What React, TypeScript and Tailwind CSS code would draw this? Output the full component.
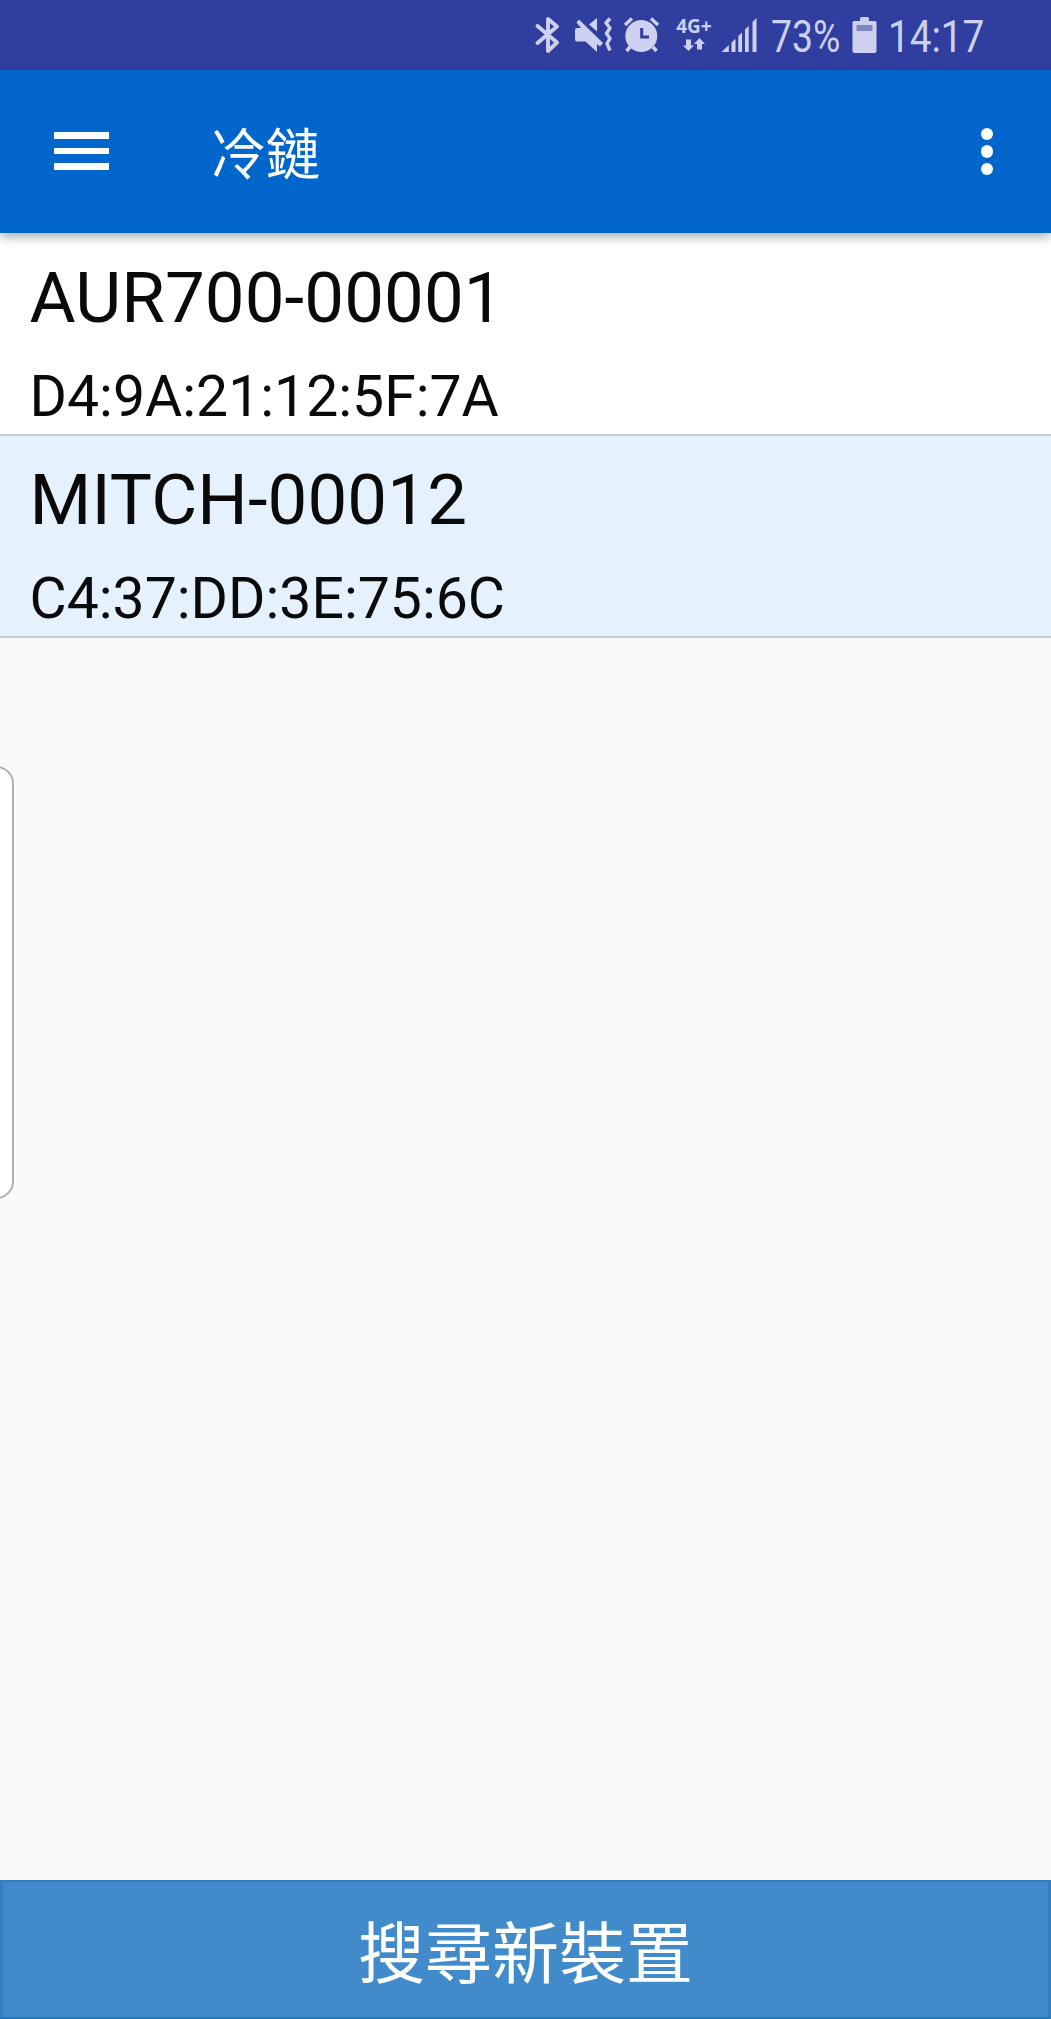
const devices = [
  { name: 'AUR700-00001', mac: 'D4:9A:21:12:5F:7A', selected: false },
  { name: 'MITCH-00012', mac: 'C4:37:DD:3E:75:6C', selected: true },
];

function BluetoothIcon() {
  return (
    <svg className="ml-[534px] w-[28px] h-[40px] shrink-0" viewBox="0 0 28 40" fill="none" stroke="currentColor" strokeWidth="3.9" strokeLinejoin="round">
      <path d="M3.5 12 L23 28.5 L14 37 V5 L23 12.5 L3.5 29" strokeLinecap="round" />
    </svg>
  );
}

function MuteVibrateIcon() {
  return (
    <svg className="ml-[12px] w-[40px] h-[40px] shrink-0" viewBox="0 0 40 40" fill="currentColor">
      <path d="M1 16 Q1 14 3 14 H7 L2.5 8.6 L5 5.5 L29 29 L26 32.5 L23 30 V38 L11.5 27.5 H3 Q1 27.5 1 25.5 Z" />
      <path d="M23 4 V17.5 L15 10.5 Z" />
      <path d="M36 4.5 L32 9 L36 14 L32.5 19.5 L36 24.5 L33 29.5 L36 36.5" fill="none" stroke="currentColor" strokeWidth="3.4" strokeLinejoin="round" />
    </svg>
  );
}

function AlarmIcon() {
  return (
    <svg className="ml-[9px] w-[38px] h-[40px] shrink-0" viewBox="0 0 38 40" fill="none" stroke="currentColor">
      <circle cx="18.3" cy="22" r="16" fill="currentColor" stroke="none" />
      <path d="M2 11 L9 4.5 M28 4.5 L35 11" strokeWidth="3.5" />
      <path d="M7 33 L3.5 37 M30 33 L33.5 37" strokeWidth="3.5" />
      <path d="M18.7 14 V23 H26" stroke="#303f9f" strokeWidth="3" />
    </svg>
  );
}

function NetworkIcon() {
  return (
    <div className="ml-[14px] w-[38px] h-[40px] shrink-0 flex flex-col items-center">
      <span className="h-[21px] mt-[2px] text-[19px] leading-[21px] font-bold font-['Open_Sans',sans-serif] whitespace-nowrap">4G+</span>
      <svg className="mt-[1px] w-[22px] h-[14px]" viewBox="0 0 22 14" fill="currentColor">
        <path d="M3 1.5 H8 V7.5 H11 L5.5 13 L0 7.5 H3 Z M14 11.5 H19 V6 H22 L16.5 0 L11 6 H14 Z" />
      </svg>
    </div>
  );
}

function SignalIcon() {
  return (
    <svg className="ml-[8px] w-[38px] h-[40px] shrink-0" viewBox="0 0 38 40" fill="currentColor">
      <path d="M0.5 38 L7.8 31 V38 Z M10.5 28.5 L14.5 24.8 V38 H10.5 Z M17.3 22 L21 18.5 V38 H17.3 Z M24 15.5 L27.7 12 V38 H24 Z M31.5 8 L35.5 4 V38 H31.5 Z" />
    </svg>
  );
}

function BatteryIcon() {
  return (
    <svg className="w-[26px] h-[40px] shrink-0" viewBox="0 0 26 40" fill="currentColor">
      <path d="M8 7 V4.5 Q8 3 9.5 3 H15.5 Q17 3 17 4.5 V7 H23 Q24.5 7 24.5 8.5 V37 Q24.5 39 22.5 39 H2.5 Q0.5 39 0.5 37 V8.5 Q0.5 7 2 7 Z" />
      <path d="M4.5 11 H20.5 V17 H4.5 Z" fill="#7f86c2" />
    </svg>
  );
}

function StatusBar() {
  return (
    <div className="h-[70px] shrink-0 bg-[#303f9f] text-[#cdd0ee] flex items-start pt-[14px] whitespace-nowrap">
      <BluetoothIcon />
      <MuteVibrateIcon />
      <AlarmIcon />
      <NetworkIcon />
      <SignalIcon />
      <div className="ml-[12px] w-[80.5px] h-[44px] shrink-0">
        <span className="inline-block origin-left scale-x-[0.83] text-[45px] leading-[46px]">73%</span>
      </div>
      <BatteryIcon />
      <div className="ml-[10.5px] h-[44px]">
        <span className="inline-block origin-left scale-x-[0.86] text-[45px] leading-[46px]">14:17</span>
      </div>
    </div>
  );
}

function AppBar() {
  return (
    <header className="relative z-10 h-[163px] shrink-0 bg-[#0066cc] flex items-center shadow-[0_4px_10px_rgba(0,0,0,0.32)]">
      <button className="ml-[54px] -mt-[1px] w-[55px] flex flex-col gap-[9px]">
        <span className="h-[7px] bg-white" />
        <span className="h-[6px] bg-white" />
        <span className="h-[7px] bg-white" />
      </button>
      <h1 className="ml-[101.5px] -mt-[4px] text-[55px] leading-[64px] text-white font-['Noto_Sans_CJK_TC',sans-serif]">冷鏈</h1>
      <button className="ml-auto mr-[58px] flex flex-col gap-[5px]">
        <span className="size-[12.5px] rounded-full bg-white" />
        <span className="size-[12.5px] rounded-full bg-white" />
        <span className="size-[12.5px] rounded-full bg-white" />
      </button>
    </header>
  );
}

export default function App() {
  return (
    <div className="relative w-[1051px] h-[2019px] flex flex-col bg-[#fafafa] overflow-hidden font-['Roboto',sans-serif]">
      <StatusBar />
      <AppBar />
      <ul className="flex-1">
        {devices.map((device) => (
          <li
            key={device.name}
            className={`box-border pl-[29.5px] border-b-2 border-[#c8cccf] text-[#0a0a0a] ${device.selected ? 'h-[202px] pt-[24px] bg-[#e5f2fe]' : 'h-[203px] pt-[25px] bg-white'}`}
          >
            <div className="text-[70.8px] leading-[80px] tracking-[0.1px]">{device.name}</div>
            <div className="mt-[26px] text-[57.1px] leading-[66px]">{device.mac}</div>
          </li>
        ))}
      </ul>
      <button className="h-[139px] shrink-0 bg-[#428bca] border-[3px] border-t-2 border-b-2 border-[#357ebd] border-b-[#2476bd] text-white text-[67px] font-['Noto_Sans_CJK_TC',sans-serif]">
        <span className="block leading-[80px] -mt-[1px]">搜尋新裝置</span>
      </button>
      <div className="absolute -left-[21px] top-[766px] w-[35px] h-[433px] rounded-[18px] border-2 border-[#b0b0b0] bg-white" />
    </div>
  );
}
